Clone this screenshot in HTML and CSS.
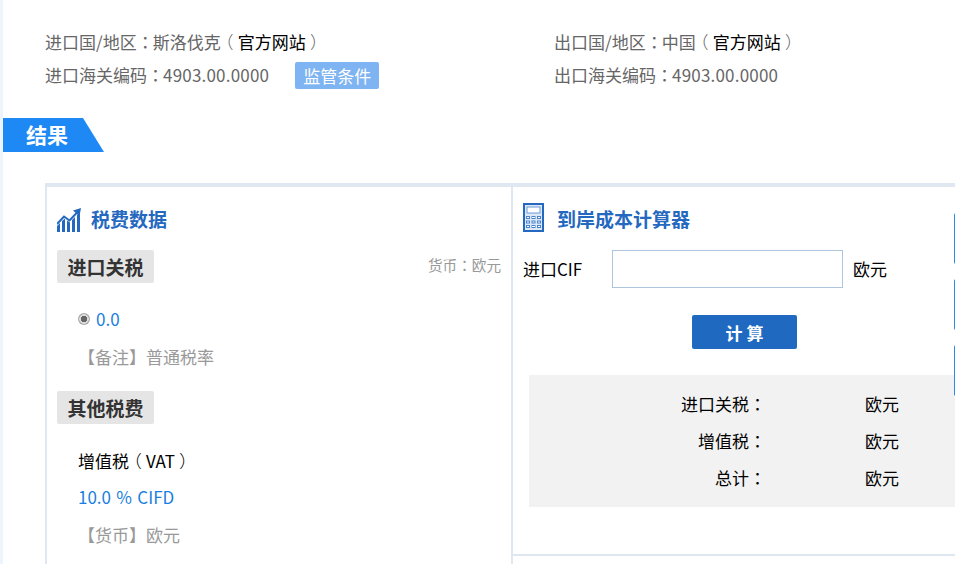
FILE: index.html
```html
<!DOCTYPE html>
<html lang="zh">
<head>
<meta charset="utf-8">
<title>结果</title>
<link rel="stylesheet" href="styles.css">
</head>
<body>
<div class="page">
  <section class="info">
    <div class="info-col">
      <p class="info-line">进口国/地区<span class="fw" lang="zh-Hant">：</span>斯洛伐克<span class="paren">（</span><a class="site">官方网站</a><span class="paren">）</span></p>
      <p class="info-line">进口海关编码<span class="fw" lang="zh-Hant">：</span><span class="num">4903.00.0000</span><span class="tag">监管条件</span></p>
    </div>
    <div class="info-col">
      <p class="info-line">出口国/地区<span class="fw" lang="zh-Hant">：</span>中国<span class="paren">（</span><a class="site">官方网站</a><span class="paren">）</span></p>
      <p class="info-line">出口海关编码<span class="fw" lang="zh-Hant">：</span><span class="num">4903.00.0000</span></p>
    </div>
  </section>
  <div class="result-banner"><span>结果</span></div>
  <section class="panel">
    <div class="tax">
      <h2 class="head">
        <svg class="chart" viewBox="0 0 24 24" width="24" height="24"><path fill="#2468bf" d="M0 24v-6l3-3v9zM5 24V13l3-2.500V24zM10 24V12.500l3 2V24zM15 24V12l3-3v15zM20 24V7l3-3v20z"/><path fill="none" stroke="#2468bf" stroke-width="2" d="M0 16L7 8.500 12.500 12.500 21 3.500"/><path fill="#2468bf" d="M16 2.500L24 0l-1.500 8z"/></svg>
        <span>税费数据</span>
      </h2>
      <div class="group-row">
        <h3 class="group">进口关税</h3>
        <span class="currency">货币<span class="fw" lang="zh-Hant">：</span>欧元</span>
      </div>
      <div class="rate-row"><span class="radio"></span><span class="blue">0.0</span></div>
      <p class="note">【备注】普通税率</p>
      <h3 class="group second">其他税费</h3>
      <p class="vat">增值税<span class="paren">（</span>VAT<span class="paren">）</span></p>
      <p class="vat-rate blue">10.0 % CIFD</p>
      <p class="note">【货币】欧元</p>
    </div>
    <div class="calc">
      <div class="calc-box">
        <h2 class="head calc-head">
          <svg class="calculator" viewBox="0 0 21 29" width="21" height="29"><rect x="1" y="1" width="19" height="27" fill="#dce8f6" stroke="#2468bf" stroke-width="2"/><rect x="4" y="4" width="13" height="6" fill="#fff" stroke="#6c9bd6"/><g fill="#fff" stroke="#4a84cc"><rect x="3.500" y="13.500" width="3" height="2"/><rect x="9" y="13.500" width="3" height="2"/><rect x="14.500" y="13.500" width="3" height="2"/><rect x="3.500" y="18" width="3" height="2"/><rect x="9" y="18" width="3" height="2"/><rect x="14.500" y="18" width="3" height="2"/><rect x="3.500" y="22.500" width="3" height="2"/><rect x="9" y="22.500" width="3" height="2"/><rect x="14.500" y="22.500" width="3" height="2"/></g></svg>
          <span>到岸成本计算器</span>
        </h2>
        <div class="cif-row">
          <label class="cif-label">进口CIF</label>
          <input class="cif-input" type="text">
          <span class="cif-unit">欧元</span>
        </div>
        <div class="btn-row"><button class="calc-btn">计 算</button></div>
        <div class="summary">
          <div class="sum-row"><span class="sum-key">进口关税<span class="fw" lang="zh-Hant">：</span></span><span class="sum-val">欧元</span></div>
          <div class="sum-row"><span class="sum-key">增值税<span class="fw" lang="zh-Hant">：</span></span><span class="sum-val">欧元</span></div>
          <div class="sum-row"><span class="sum-key">总计<span class="fw" lang="zh-Hant">：</span></span><span class="sum-val">欧元</span></div>
        </div>
      </div>
    </div>
    <div class="edge-tabs"><i></i><i></i><i></i></div>
  </section>
</div>
</body>
</html>
```
FILE: styles.css
```css
* { box-sizing: border-box; }
html, body { margin: 0; padding: 0; height: 100%; overflow: hidden; background: #fff; }
body {
  font-family: "Noto Sans CJK SC", "Open Sans", sans-serif;
  font-size: 17px;
  color: #000;
}
h2, h3, p { margin: 0; font-weight: normal; }
.page {
  height: 564px;
  width: 955px;
  border-left: 3px solid #edf4fb;
  overflow: hidden;
  position: relative;
}
.fw { font-family: "Noto Sans CJK TC", sans-serif; }
.paren { display: inline-block; padding: 0 4.25px; font-weight: 300; font-feature-settings: "halt"; }
.num { letter-spacing: 0.2px; }
.info { display: flex; padding: 26px 0 0 42px; height: 118px; }
.info-col { width: 510px; flex: none; margin-left: -1px; }
.info-col:first-child { margin-left: 0; }
.info-line { height: 33px; line-height: 31px; color: #666; white-space: nowrap; }
.info-line .fw { margin-right: -1px; }
.site { color: #000; }
.tag {
  display: inline-block;
  margin-left: 26px;
  width: 84px;
  height: 27px;
  line-height: 27px;
  text-align: center;
  background: #7fb4f2;
  color: #fff;
  border-radius: 2px;
  vertical-align: -1px;
}
.result-banner {
  width: 101px;
  height: 34px;
  background: #1e88f5;
  clip-path: polygon(0 0, 80px 0, 101px 34px, 0 34px);
  color: #fff;
  font-size: 21px;
  font-weight: bold;
  line-height: 32px;
  padding-left: 23px;
}
.panel {
  position: relative;
  display: flex;
  margin: 31px 0 0 42px;
  width: 920px;
  height: 400px;
  border-top: 4px solid #dfe8f0;
  border-left: 2px solid #dfe8f0;
}
.tax { width: 466px; padding: 0 10px; border-right: 2px solid #dfe8f0; flex: none; }
.head {
  display: flex;
  align-items: center;
  color: #2468bf;
  font-size: 19px;
  font-weight: bold;
  height: 63px;
}
.chart { margin-right: 10px; margin-top: 2px; }
.group-row { display: flex; justify-content: space-between; align-items: center; }
.group {
  width: 97px;
  height: 33px;
  line-height: 33px;
  text-align: center;
  background: #e5e5e5;
  border-radius: 2px;
  color: #333;
  font-size: 19px;
  font-weight: bold;
}
.second { margin-top: 16px; }
.currency { color: #999; font-size: 14.6px; margin-top: -4px; }
.rate-row { display: flex; align-items: center; height: 39px; margin-top: 16px; padding-left: 21px; }
.radio {
  width: 12px;
  height: 12px;
  border-radius: 50%;
  background: radial-gradient(circle, #666 0 3px, #ddd 3.500px 4.500px, #aaa 5px);
  margin-right: 6px;
  margin-top: 1px;
}
.blue { color: #1a7fe0; }
.note { height: 37px; line-height: 37px; color: #999; padding-left: 21px; }
.vat { height: 37px; line-height: 37px; margin-top: 18px; padding-left: 21px; white-space: nowrap; }
.vat-rate { height: 37px; line-height: 35px; padding-left: 21px; word-spacing: 1.5px; }
.calc { flex: 1; }
.calc-box { height: 369px; border-bottom: 2px solid #dfe8f0; padding-left: 10px; }
.calc-head { height: 63px; }
.calculator { margin-right: 13px; margin-top: -3px; }
.cif-row { display: flex; align-items: center; height: 38px; }
.cif-label { width: 89px; margin-top: -2px; }
.cif-input { width: 231px; height: 38px; border: 1px solid #adc5de; background: #fff; padding: 0; }
.cif-unit { margin-left: 10px; margin-top: -2px; }
.btn-row { padding: 27px 0 0 169px; }
.calc-btn {
  display: block;
  width: 105px;
  height: 34px;
  background: #1f69c1;
  border: 0;
  border-radius: 2px;
  color: #fff;
  font: bold 17px "Noto Sans CJK SC", sans-serif;
}
.summary { margin: 26px 0 0 6px; width: 500px; height: 132px; background: #f2f2f2; padding-top: 10px; }
.sum-row { display: flex; height: 37px; line-height: 37px; }
.sum-key { width: 237px; text-align: right; }
.sum-val { margin-left: 99px; }
.edge-tabs { position: absolute; left: 907px; top: 26px; width: 3px; display: flex; flex-direction: column; gap: 15px; }
.edge-tabs i { display: block; height: 51px; background: #2a8af0; border-radius: 2px 0 0 2px; }
```
